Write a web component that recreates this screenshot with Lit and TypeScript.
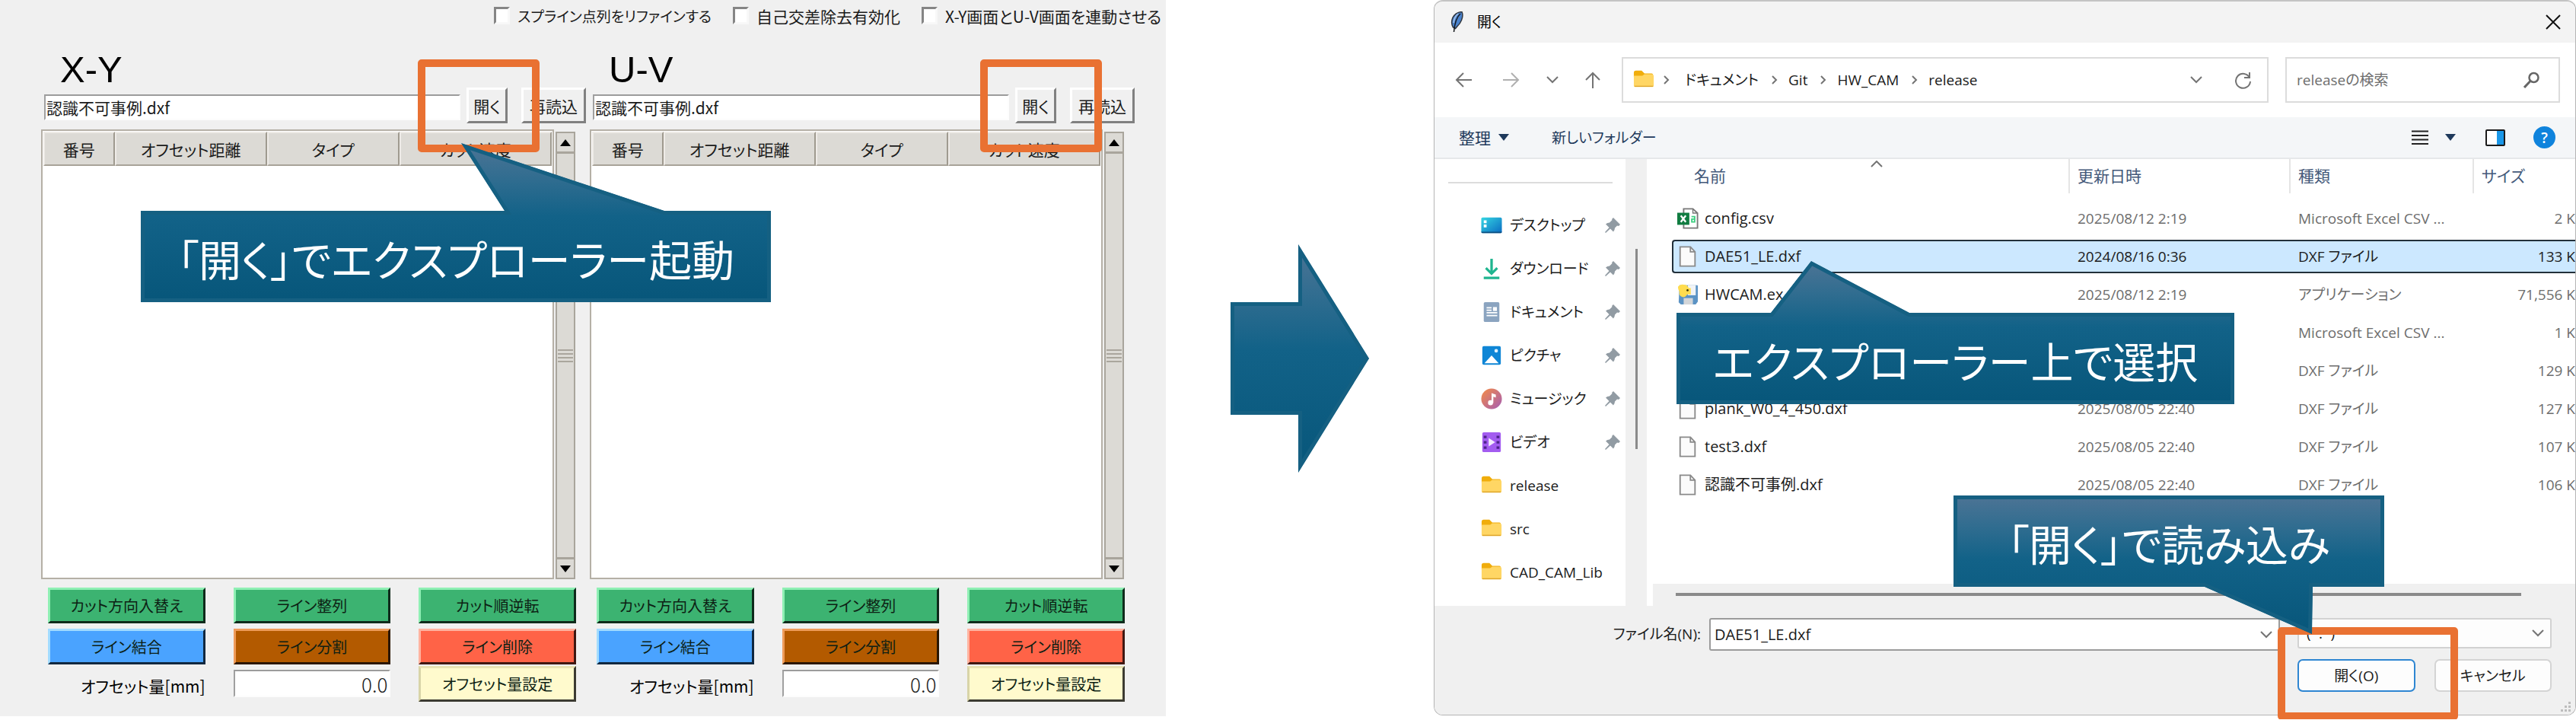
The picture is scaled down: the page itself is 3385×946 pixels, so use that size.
import { LitElement, html, css, svg, nothing } from "lit";
import { customElement, property } from "lit/decorators.js";
import { classMap } from "lit/directives/class-map.js";

const JP = css`"Noto Sans CJK JP", sans-serif`;

/** Speech-bubble note: a gradient shape with an inner outline and centred text. */
@customElement("callout-note")
export class CalloutNote extends LitElement {
  @property({ type: Number }) w = 0;
  @property({ type: Number }) h = 0;
  @property() points = "";
  @property() text = "";
  @property() side: "top" | "bottom" = "top";

  static styles = css`
    :host {
      display: flex;
      position: relative;
    }
    .shape {
      position: absolute;
      inset: 0;
      width: 100%;
      height: 100%;
    }
    .text {
      position: relative;
      width: 100%;
      height: 120px;
      line-height: 124px;
      text-align: center;
      white-space: nowrap;
      color: #fff;
      font-size: 56px;
    }
    .bottom {
      align-self: flex-end;
    }
  `;

  render() {
    return html`
      <svg class="shape" viewBox="0 0 ${this.w} ${this.h}" aria-hidden="true">
        <defs>
          <linearGradient id="fill" x1="0" y1="0" x2="0" y2="1">
            <stop offset="0" stop-color="#4d7495"></stop>
            <stop offset="0.22" stop-color="#316d90"></stop>
            <stop offset="0.46" stop-color="#126288"></stop>
            <stop offset="1" stop-color="#07567a"></stop>
          </linearGradient>
          <clipPath id="edge"><polygon points=${this.points}></polygon></clipPath>
        </defs>
        <polygon
          points=${this.points}
          fill="url(#fill)"
          stroke="#156082"
          stroke-width="10"
          clip-path="url(#edge)"
        ></polygon>
      </svg>
      ${this.text
        ? html`<div class=${classMap({ text: true, bottom: this.side === "bottom" })}>${this.text}</div>`
        : nothing}
    `;
  }
}

/** One drawing plane: file row, segment list and its editing buttons. */
@customElement("plane-panel")
export class PlanePanel extends LitElement {
  @property() name = "";

  static styles = css`
    :host {
      display: block;
      min-width: 0;
    }
    h2 {
      margin: 0;
      padding-left: 25px;
      height: 65px;
      font: 400 49px/82px "Liberation Sans", sans-serif;
      color: #000;
    }
    button,
    input {
      font: inherit;
      color: inherit;
      box-sizing: border-box;
      border-radius: 0;
      margin: 0;
      outline: none;
    }
    .file {
      display: flex;
      align-items: flex-end;
      padding: 0 5px 0 4px;
      height: 47px;
    }
    .field {
      border: 2px solid;
      border-color: #9c9c9c #fdfdfd #fdfdfd #a0a0a0;
      background: #fff;
    }
    .path {
      flex: 1;
      min-width: 0;
      height: 34px;
      margin: 0 8px 4px 0;
      padding: 0 1px;
    }
    .plain {
      height: 47px;
      padding: 0;
      background: #f0f0f0;
      border: 3px solid;
      border-color: #fff #808080 #808080 #fff;
      line-height: 36px;
    }
    .open {
      width: 54px;
      margin-right: 18px;
    }
    .reload {
      width: 85px;
    }
    .list {
      display: flex;
      gap: 2px;
      height: 591px;
      margin-top: 8px;
      padding-right: 19px;
    }
    .frame {
      flex: 1;
      box-sizing: border-box;
      border: 2px solid #b5b0a6;
      background: #fff;
      padding: 1px;
    }
    table {
      width: 100%;
      table-layout: fixed;
      border-spacing: 0;
    }
    th {
      height: 45px;
      box-sizing: border-box;
      padding: 0;
      font-weight: 400;
      background: #dcdad5;
      border: 2px solid;
      border-color: #eeebe7 #9f9a8f #a8a398 #eeebe7;
    }
    .c1 {
      width: 14%;
    }
    .c2 {
      width: 30%;
    }
    .c3 {
      width: 26%;
    }
    .bar {
      display: flex;
      flex-direction: column;
      width: 26px;
      box-sizing: border-box;
      margin-top: 3px;
      border: 2px solid #a9a59c;
      background: #dcdad5;
    }
    .end {
      height: 24px;
      padding: 0;
      border: 0;
      background: #dcdad5;
      display: grid;
      place-items: center;
    }
    .thumb {
      flex: 1;
      border-block: 3px solid #a9a59c;
      display: flex;
      flex-direction: column;
      justify-content: center;
      gap: 3px;
    }
    .thumb i {
      height: 2px;
      background: #aaa69d;
      margin: 0 1px;
    }
    .tools {
      display: grid;
      grid-template-columns: repeat(3, 1fr);
      grid-template-rows: 54px 49px 47px;
      column-gap: 37px;
      padding: 11px 18px 0 9px;
    }
    .tool {
      height: 47px;
      padding: 0;
      border: 3px solid;
      color: #0d1f14;
      font-size: 20px;
      line-height: 38px;
    }
    .green {
      background: #3cb371;
      border-color: #8ff0b4 #0f2a1b #0f2a1b #8ff0b4;
    }
    .blue {
      background: #4aa3ff;
      border-color: #a3dcff #12283f #12283f #a3dcff;
    }
    .brown {
      background: #b35a00;
      border-color: #ef9c5a #2b1703 #2b1703 #ef9c5a;
    }
    .red {
      background: #ff6347;
      border-color: #ffb3a0 #3f1812 #3f1812 #ffb3a0;
    }
    .cream {
      background: #fffacd;
      border-color: #e9e3b4 #3c3b32 #3c3b32 #d8d4a8;
    }
    label {
      text-align: right;
      line-height: 52px;
      white-space: nowrap;
      color: #000;
    }
    .amount {
      width: 100%;
      height: 36px;
      margin-top: 5px;
      padding: 0 2px;
      text-align: right;
      font-size: 26px;
      font-weight: 300;
    }
  `;

  render() {
    return html`
      <h2>${this.name}</h2>
      <div class="file">
        <input class="field path" aria-label="${this.name}" value="認識不可事例.dxf" />
        <button class="plain open">開く</button>
        <button class="plain reload">再読込</button>
      </div>
      <div class="list">
        <div class="frame">
          <table>
            <thead>
              <tr>
                <th class="c1">番号</th>
                <th class="c2">オフセット距離</th>
                <th class="c3">タイプ</th>
                <th>カット速度</th>
              </tr>
            </thead>
          </table>
        </div>
        <div class="bar">
          <button class="end"><svg width="14" height="9"><path d="M7 0L14 9H0z" /></svg></button>
          <div class="thumb"><i></i><i></i><i></i><i></i></div>
          <button class="end"><svg width="14" height="9"><path d="M0 0H14L7 9z" /></svg></button>
        </div>
      </div>
      <div class="tools">
        <button class="tool green">カット方向入替え</button>
        <button class="tool green">ライン整列</button>
        <button class="tool green">カット順逆転</button>
        <button class="tool blue">ライン結合</button>
        <button class="tool brown">ライン分割</button>
        <button class="tool red">ライン削除</button>
        <label for="amount">オフセット量[mm]</label>
        <input id="amount" class="field amount" value="0.0" />
        <button class="tool cream">オフセット量設定</button>
      </div>
    `;
  }
}

const folder = svg`
  <path d="M1 5q0-3 3-3h8l4 4h10q2 0 2 2v3H1z" fill="#f0ad0c"/>
  <path d="M1 9h12l3-2h10q3 0 3 3v13q0 2-2 2H3q-2 0-2-2z" fill="#ffd664"/>
  <path d="M2 24h26" stroke="#dda52a" stroke-width="1.5"/>`;

const ICONS: Record<string, unknown> = {
  folder,
  desktop: svg`
    <defs><linearGradient id="de" x2="1" y2="1"><stop stop-color="#35d6e2"/><stop offset="1" stop-color="#0a6bc2"/></linearGradient></defs>
    <rect x="0.500" y="4" width="29" height="22" rx="2" fill="url(#de)"/>
    <path d="M0.500 24h29q0 2-2 2h-25q-2 0-2-2z" fill="#0c4f80"/>
    <path d="M4 8h4v4H4zM4 14h4v4H4z" fill="#fff"/>`,
  download: svg`
    <path d="M15 1v21M7 14l8 8 8-8" fill="none" stroke="#1fb58f" stroke-width="3.500"/>
    <path d="M4 28h22" stroke="#1fb58f" stroke-width="3.500"/>`,
  document: svg`
    <rect x="4" y="1" width="22" height="28" rx="2" fill="#8ba4c0"/>
    <path d="M8 9h7M8 12.500h7M8 16h15M8 20h15" stroke="#fff" stroke-width="2"/>
    <rect x="17" y="8" width="5.500" height="5.500" fill="#fff"/>`,
  picture: svg`
    <rect x="2" y="2" width="26" height="26" rx="2" fill="#0f86d6"/>
    <path d="M5 26L15 15l10 11z" fill="#fff"/><circle cx="21.500" cy="8.500" r="2.500" fill="#dff1ff"/>`,
  music: svg`
    <defs><linearGradient id="mu" x2="1" y2="1"><stop stop-color="#f58c46"/><stop offset="1" stop-color="#a45cb4"/></linearGradient></defs>
    <circle cx="15" cy="15" r="14.500" fill="url(#mu)"/>
    <circle cx="13.500" cy="20.500" r="3.500" fill="#fff"/><path d="M15 21V7l6 2v4l-3.500-1v9z" fill="#fff"/>`,
  video: svg`
    <rect x="2" y="1" width="26" height="28" rx="2" fill="#a35cf0"/>
    <path d="M4 6h4v3.500H4zM4 13.500h4V17H4zM4 21h4v3.500H4zM22 6h4v3.500h-4zM22 13.500h4V17h-4zM22 21h4v3.500h-4z" fill="#4c2389"/>
    <path d="M11 9l9 6-9 6z" fill="#f3ecfd"/>`,
  file: svg`
    <path d="M4 1.500h14.500l6.500 7V28.500H4z" fill="#fbfbfb" stroke="#8a8a8a" stroke-width="2"/>
    <path d="M18.500 1.500v7H25" fill="none" stroke="#8a8a8a" stroke-width="2"/>`,
  csv: svg`
    <path d="M9 1.500h13l6.500 6V28.500H9z" fill="#fff" stroke="#777" stroke-width="2"/>
    <path d="M22 1.500v6h6" fill="none" stroke="#777" stroke-width="1.500"/>
    <rect x="0" y="7" width="17" height="17" fill="#107c41"/>
    <path d="M5 11l7 9M12 11l-7 9" stroke="#fff" stroke-width="2.500"/>
    <path d="M20 12.500h4.500v7.500h-4v-4h4" fill="none" stroke="#3ccf80" stroke-width="2"/>`,
  exe: svg`
    <path d="M3 2h25q1 0 1 1v22l-3 4H5l-3-3z" fill="#5b93c4"/>
    <path d="M15 2h11v14H15z" fill="#f1f4f7"/>
    <path d="M1 4q3-4 8-3 6 0 7 5h3v9q-5-1-6 1-2 4-7 2-4-2-3-7-2-3-2-7z" fill="#ffdc4e"/>
    <circle cx="14.500" cy="9" r="1.500" fill="#3c3200"/>
    <path d="M9 20h13v9H9z" fill="#d3d6d9"/>`,
};

const PLACES: { label: string; icon: string; pinned?: boolean }[] = [
  { label: "デスクトップ", icon: "desktop", pinned: true },
  { label: "ダウンロード", icon: "download", pinned: true },
  { label: "ドキュメント", icon: "document", pinned: true },
  { label: "ピクチャ", icon: "picture", pinned: true },
  { label: "ミュージック", icon: "music", pinned: true },
  { label: "ビデオ", icon: "video", pinned: true },
  { label: "release", icon: "folder" },
  { label: "src", icon: "folder" },
  { label: "CAD_CAM_Lib", icon: "folder" },
];

const FILES = [
  { name: "config.csv", icon: "csv", date: "2025/08/12 2:19", type: "Microsoft Excel CSV ...", size: "2 K" },
  { name: "DAE51_LE.dxf", icon: "file", date: "2024/08/16 0:36", type: "DXF ファイル", size: "133 K" },
  { name: "HWCAM.ex", icon: "exe", date: "2025/08/12 2:19", type: "アプリケーション", size: "71,556 K" },
  { name: "", icon: "csv", date: "", type: "Microsoft Excel CSV ...", size: "1 K" },
  { name: "", icon: "file", date: "", type: "DXF ファイル", size: "129 K" },
  { name: "plank_W0_4_450.dxf", icon: "file", date: "2025/08/05 22:40", type: "DXF ファイル", size: "127 K" },
  { name: "test3.dxf", icon: "file", date: "2025/08/05 22:40", type: "DXF ファイル", size: "107 K" },
  { name: "認識不可事例.dxf", icon: "file", date: "2025/08/05 22:40", type: "DXF ファイル", size: "106 K" },
];

const SELECTED = "DAE51_LE.dxf";

/** File-open dialog: title bar, address row, places, file table and footer. */
@customElement("open-dialog")
export class OpenDialog extends LitElement {
  static styles = css`
    :host {
      display: flex;
      flex-direction: column;
      box-sizing: border-box;
      border: 1px solid #b4b4b4;
      border-top: 2px solid #c4c4c4;
      border-radius: 12px;
      overflow: hidden;
      background: #fff;
      font-family: "Open Sans", ${JP};
      font-size: 19px;
      line-height: 30px;
      color: #1b1b1b;
      white-space: nowrap;
    }
    button,
    input,
    select {
      font: inherit;
      color: inherit;
      box-sizing: border-box;
      margin: 0;
      padding: 0;
      border: 0;
      background: none;
      outline: none;
      appearance: none;
    }
    button {
      display: flex;
      align-items: center;
    }
    svg {
      display: block;
      flex: none;
    }
    .line {
      fill: none;
      stroke: #747474;
      stroke-width: 2;
    }
    .dim {
      stroke: #b0b0b0;
    }
    .title {
      display: flex;
      align-items: center;
      height: 54px;
      padding: 0 19px 0 20px;
      background: #f3f3f3;
      color: #000;
    }
    .title span {
      flex: 1;
      padding-left: 16px;
    }
    .nav {
      display: flex;
      align-items: center;
      height: 98px;
      padding: 0 20px 0 27px;
    }
    .arrows {
      display: flex;
      width: 219px;
    }
    .back {
      width: 63px;
    }
    .next {
      width: 57px;
    }
    .recent {
      width: 50px;
    }
    .box {
      display: flex;
      align-items: center;
      box-sizing: border-box;
      height: 60px;
      border: 2px solid #dcdcdc;
    }
    .address {
      flex: 1;
      padding: 0 20px 0 13px;
    }
    .crumbs {
      flex: 1;
      display: flex;
      align-items: center;
    }
    .crumbs svg.sep {
      margin: 0 14px 0 17px;
    }
    .crumbs svg.first {
      margin: 0 20px 0 12px;
    }
    .crumbs a {
      color: inherit;
      text-decoration: none;
    }
    .address .drop {
      margin-right: 42px;
    }
    .search {
      width: 361px;
      margin-left: 22px;
      padding: 0 24px 0 13px;
    }
    .search input {
      flex: 1;
      min-width: 0;
    }
    .search input::placeholder {
      color: #6e6e6e;
      opacity: 1;
    }
    .tools {
      display: flex;
      align-items: center;
      box-sizing: border-box;
      height: 55px;
      padding: 0 26px 0 32px;
      background: #f4f6f8;
      border-bottom: 2px solid #e6e8ea;
      color: #1e395b;
    }
    .tools .sort {
      gap: 10px;
      margin-right: 56px;
      font-size: 21px;
    }
    .fresh {
      flex: 1;
    }
    .view {
      gap: 22px;
      margin-right: 39px;
    }
    .pane {
      margin-right: 37px;
    }
    .help {
      display: grid;
      place-items: center;
      width: 29px;
      height: 29px;
      border-radius: 50%;
      background: #0f83dc;
      color: #fff;
      font-weight: 600;
    }
    .body {
      display: flex;
      height: 587px;
    }
    .side {
      width: 251px;
      box-sizing: border-box;
      padding: 30px 7px 0 18px;
    }
    hr {
      margin: 0 10px 26px 0;
      border: 0;
      height: 2px;
      background: #dcdcdc;
    }
    .place {
      display: flex;
      align-items: center;
      width: 100%;
      height: 57px;
      padding-left: 43px;
      gap: 10px;
    }
    .place span {
      flex: 1;
      text-align: left;
    }
    .vbar {
      width: 28px;
      box-sizing: border-box;
      background: #f0f0f0;
      padding: 118px 0 0 13px;
    }
    .vbar i {
      display: block;
      width: 3px;
      height: 263px;
      background: #8a8a8a;
    }
    .main {
      flex: 1;
      min-width: 0;
      display: flex;
      flex-direction: column;
      margin-left: 8px;
    }
    .files {
      flex: 1;
      padding-left: 25px;
    }
    table {
      width: 100%;
      table-layout: fixed;
      border-spacing: 0 6px;
      margin-top: -6px;
    }
    th {
      height: 50px;
      padding: 0;
      vertical-align: top;
      text-align: left;
      font-weight: 400;
      font-size: 21px;
      color: #44597a;
    }
    th div {
      position: relative;
      height: 45px;
      line-height: 45px;
      padding-left: 10px;
      border-left: 2px solid #e5e5e5;
    }
    th .lead {
      padding-left: 29px;
      border: 0;
    }
    .caret {
      position: absolute;
      left: 50%;
      top: 2px;
    }
    .date {
      width: 290px;
    }
    .type {
      width: 241px;
    }
    .size {
      width: 135px;
    }
    td {
      height: 44px;
      box-sizing: border-box;
      padding: 0 0 0 12px;
      border-block: 2px solid transparent;
      color: #6d6d6d;
    }
    td.num {
      padding: 0;
      text-align: right;
    }
    td.name {
      color: #1b1b1b;
      font-size: 20px;
      padding-left: 5px;
      border-left: 2px solid transparent;
    }
    td.name div {
      display: flex;
      align-items: center;
      gap: 8px;
    }
    .on td {
      background: #cce8ff;
      border-color: #22303a;
      color: #1b1b1b;
    }
    .on td.name {
      border-radius: 4px 0 0 4px;
    }
    .hbar {
      height: 29px;
      box-sizing: border-box;
      background: #f0f0f0;
      padding: 12px 71px 0 30px;
    }
    .hbar i {
      display: block;
      height: 4px;
      background: #8a8a8a;
    }
    .foot {
      display: grid;
      grid-template-columns: 350px 1fr 334px;
      column-gap: 23px;
      height: 143px;
      box-sizing: border-box;
      padding: 16px 31px 0 0;
      background: #f0f0f0;
      grid-template-rows: 54px 43px;
    }
    .name-row {
      grid-column: 1 / 3;
      display: flex;
    }
    .name-row label {
      width: 361px;
      box-sizing: border-box;
      padding-right: 11px;
      text-align: right;
      line-height: 43px;
    }
    .combo {
      display: flex;
      align-items: center;
      box-sizing: border-box;
      flex: 1;
      height: 43px;
      padding: 0 8px 0 5px;
      background: #fff;
      border: 2px solid #9b9b9b;
      border-radius: 3px;
    }
    .combo input,
    .combo select {
      flex: 1;
      min-width: 0;
      height: 100%;
    }
    .combo input {
      font-size: 20px;
    }
    .filter {
      height: 40px;
      flex: none;
      padding-left: 10px;
      background: #fdfdfd;
      border-color: #d2d2d2;
    }
    .actions {
      grid-column: 3;
      display: grid;
      grid-template-columns: 1fr 1fr;
      column-gap: 25px;
      position: relative;
    }
    .actions button {
      justify-content: center;
      height: 43px;
      border: 2px solid #d4d4d4;
      border-radius: 7px;
      background: #fdfdfd;
    }
    .actions .ok {
      border-color: #2e86d2;
    }
    .grip {
      position: absolute;
      right: -26px;
      top: 56px;
    }
  `;

  private icon(name: string) {
    return html`<svg width="28" height="28" viewBox="0 0 30 30">${ICONS[name]}</svg>`;
  }

  private chevron() {
    return html`<svg width="16" height="10"><path class="line" d="M1 1l7 7 7-7" /></svg>`;
  }

  private sep(first = false) {
    return html`<svg class=${classMap({ sep: true, first })} width="8" height="12">
      <path class="line" d="M1 1l5 5-5 5" />
    </svg>`;
  }

  render() {
    return html`
      <div class="title">
        <svg width="20" height="28" viewBox="0 0 20 28">
          <path
            d="M16 .500q2 5-.500 11-2 5-5.500 8l-2.500 3-3-1.500Q1 15 4 8q4-7 12-7.500z"
            fill="#4a82cc"
            stroke="#30363f"
            stroke-width="1.500"
          />
          <path d="M14 3q-7 6-8.500 24" fill="none" stroke="#16191d" stroke-width="1.500" />
          <path d="M11 3q-5 4-6 12" fill="none" stroke="#a9c6ec" stroke-width="1.500" />
        </svg>
        <span>開く</span>
        <button aria-label="閉じる">
          <svg width="20" height="20"><path d="M1 1l18 18M19 1L1 19" stroke="#111" stroke-width="2" /></svg>
        </button>
      </div>
      <div class="nav">
        <div class="arrows">
          <button class="back"><svg width="22" height="22"><path class="line" d="M22 11H2M11 2l-9 9 9 9" /></svg></button>
          <button class="next"><svg width="22" height="22"><path class="line dim" d="M0 11h20M11 2l9 9-9 9" /></svg></button>
          <button class="recent">${this.chevron()}</button>
          <button><svg width="22" height="22"><path class="line" d="M11 22V2M2 11l9-9 9 9" /></svg></button>
        </div>
        <div class="box address">
          <div class="crumbs">
            ${this.icon("folder")}${this.sep(true)}
            <a href="#">ドキュメント</a>${this.sep()}
            <a href="#">Git</a>${this.sep()}
            <a href="#">HW_CAM</a>${this.sep()}
            <a href="#">release</a>
          </div>
          <button class="drop">${this.chevron()}</button>
          <button>
            <svg width="23" height="23">
              <path class="line" d="M20 8a9.500 9.500 0 1 0 1 5M20 1v7h-7" />
            </svg>
          </button>
        </div>
        <div class="box search">
          <input type="search" placeholder="releaseの検索" aria-label="releaseの検索" />
          <svg width="22" height="22">
            <circle cx="13.500" cy="8" r="6" fill="none" stroke="#666" stroke-width="2.500" />
            <path d="M9 12.500L1 21" stroke="#666" stroke-width="3" />
          </svg>
        </div>
      </div>
      <div class="tools">
        <button class="sort">整理 <svg width="14" height="9"><path d="M0 0h14L7 9z" fill="#1e395b" /></svg></button>
        <div class="fresh"><button>新しいフォルダー</button></div>
        <button class="view">
          <svg width="22" height="20"><path d="M0 1.500h22M0 7h22M0 12.500h22M0 18h22" stroke="#222" stroke-width="2" /></svg>
          <svg width="14" height="9"><path d="M0 0h14L7 9z" fill="#1e395b" /></svg>
        </button>
        <button class="pane">
          <svg width="26" height="22">
            <rect x="1" y="1" width="24" height="20" rx="1" fill="#fff" stroke="#1b1b1b" stroke-width="2" />
            <path d="M15 2h9v18h-9z" fill="#1a97e8" />
          </svg>
        </button>
        <button class="help">?</button>
      </div>
      <div class="body">
        <div class="side">
          <hr />
          ${PLACES.map(
            (p) => html`<button class="place">
              ${this.icon(p.icon)}<span>${p.label}</span>
              ${p.pinned
                ? html`<svg width="20" height="20" viewBox="0 0 20 20">
                    <path d="M11 0l9 9-2 2-2-.500-3 3q0 3-2 5L7 14.500 1 20l-1-1 5.500-6L1 8.500q2-2 5-2l3.500-3.500L9 2z" fill="#919ba3" />
                  </svg>`
                : nothing}
            </button>`,
          )}
        </div>
        <div class="vbar"><i></i></div>
        <div class="main">
          <div class="files">
            <table>
              <thead>
                <tr>
                  <th>
                    <div class="lead">
                      名前
                      <svg class="caret" width="16" height="9"><path class="line" d="M1 8l7-7 7 7" /></svg>
                    </div>
                  </th>
                  <th class="date"><div>更新日時</div></th>
                  <th class="type"><div>種類</div></th>
                  <th class="size"><div>サイズ</div></th>
                </tr>
              </thead>
              <tbody>
                ${FILES.map(
                  (f) => html`<tr class=${classMap({ on: f.name === SELECTED })}>
                    <td class="name"><div>${this.icon(f.icon)}<span>${f.name}</span></div></td>
                    <td>${f.date}</td>
                    <td>${f.type}</td>
                    <td class="num">${f.size}</td>
                  </tr>`,
                )}
              </tbody>
            </table>
          </div>
          <div class="hbar"><i></i></div>
        </div>
      </div>
      <div class="foot">
        <div class="name-row">
          <label for="fname">ファイル名(N):</label>
          <div class="combo"><input id="fname" value=${SELECTED} />${this.chevron()}</div>
        </div>
        <div class="combo filter">
          <select aria-label="ファイルの種類">
            <option>(*.*)</option>
          </select>
          ${this.chevron()}
        </div>
        <div class="actions">
          <button class="ok">開く(O)</button>
          <button>キャンセル</button>
          <svg class="grip" width="15" height="15">
            <path
              d="M11 0h3v3h-3zM11 5h3v3h-3zM11 10h3v3h-3zM6 5h3v3H6zM6 10h3v3H6zM1 10h3v3H1z"
              fill="#bdbdbd"
            />
          </svg>
        </div>
      </div>
    `;
  }
}

@customElement("app-root")
export class AppRoot extends LitElement {
  static styles = css`
    :host {
      display: flex;
      align-items: flex-start;
      overflow: hidden;
      background: #fff;
      font-family: ${JP};
      font-size: 21px;
      font-feature-settings: "palt";
      color: #1a1a1a;
    }
    .editor {
      position: relative;
      flex: 1532 1 0;
      min-width: 0;
      box-sizing: border-box;
      padding-bottom: 19px;
      background: #f0f0f0;
    }
    .options {
      display: flex;
      justify-content: flex-end;
      gap: 28px;
      height: 50px;
      padding-right: 6px;
      line-height: 42px;
      white-space: nowrap;
    }
    .options label {
      display: flex;
      gap: 10px;
    }
    .options .long {
      font-size: 19px;
    }
    .options input {
      appearance: none;
      box-sizing: border-box;
      width: 21px;
      height: 23px;
      margin: 9px 0 0;
      background: #fff;
      border: 3px solid;
      border-color: #858585 #f8f8f8 #f8f8f8 #858585;
    }
    .planes {
      display: grid;
      grid-template-columns: 1fr 1fr;
      padding: 0 36px 0 54px;
    }
    .between {
      flex: 352 1 0;
      align-self: center;
      display: flex;
      justify-content: center;
      padding-bottom: 4px;
    }
    .arrow {
      width: 182px;
      height: 300px;
    }
    .picker {
      position: relative;
      flex: 1501 1 0;
      min-width: 0;
      padding-bottom: 5px;
    }
    .ring {
      position: absolute;
      box-sizing: border-box;
      width: 160px;
      height: 122px;
      border: 10px solid #e97132;
      border-radius: 5px;
      pointer-events: none;
    }
    .ring-xy {
      left: 549px;
      top: 78px;
    }
    .ring-uv {
      left: 1288px;
      top: 78px;
    }
    .ring-ok {
      right: 155px;
      top: 824px;
      width: 237px;
    }
    .note {
      position: absolute;
    }
    .note-launch {
      left: 185px;
      top: 188px;
      width: 828px;
      height: 209px;
    }
    .note-pick {
      left: 319px;
      top: 343px;
      width: 733px;
      height: 188px;
    }
    .note-load {
      right: 252px;
      top: 651px;
      width: 566px;
      height: 182px;
    }
  `;

  render() {
    return html`
      <section class="editor">
        <div class="options">
          <label class="long"><input type="checkbox" />スプライン点列をリファインする</label>
          <label><input type="checkbox" />自己交差除去有効化</label>
          <label><input type="checkbox" />X-Y画面とU-V画面を連動させる</label>
        </div>
        <div class="planes">
          <plane-panel name="X-Y"></plane-panel>
          <plane-panel name="U-V"></plane-panel>
        </div>
        <div class="ring ring-xy"></div>
        <div class="ring ring-uv"></div>
        <callout-note
          class="note note-launch"
          w="828"
          h="209"
          side="bottom"
          points="0,89 478,89 421,0 688,89 828,89 828,209 0,209"
          text="「開く」でエクスプローラー起動"
        ></callout-note>
      </section>
      <div class="between">
        <callout-note
          class="arrow"
          w="182"
          h="300"
          points="0,76 89,76 89,0 182,150 89,300 89,224 0,224"
        ></callout-note>
      </div>
      <section class="picker">
        <open-dialog></open-dialog>
        <div class="ring ring-ok"></div>
        <callout-note
          class="note note-pick"
          w="733"
          h="188"
          side="bottom"
          points="0,68 124,68 177,0 306,68 733,68 733,188 0,188"
          text="エクスプローラー上で選択"
        ></callout-note>
        <callout-note
          class="note note-load"
          w="566"
          h="182"
          points="0,0 566,0 566,120 472,120 471,182 330,120 0,120"
          text="「開く」で読み込み"
        ></callout-note>
      </section>
    `;
  }
}
